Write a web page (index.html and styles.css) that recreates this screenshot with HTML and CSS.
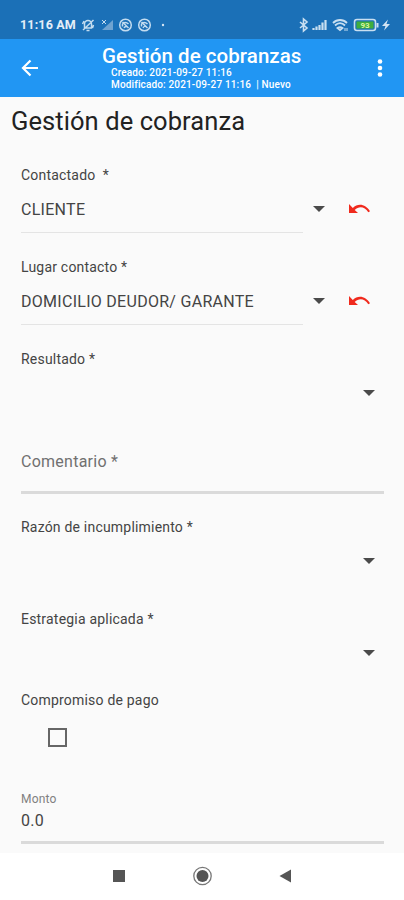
FILE: index.html
```html
<!DOCTYPE html>
<html lang="es">
<head>
    <meta charset="UTF-8">
    <meta name="viewport" content="width=device-width, initial-scale=1.0">
    <title>Gestión de cobranzas</title>
    <link rel="stylesheet" href="styles.css">
</head>
<body>

<div class="status-bar">
    <span class="clock">11:16 AM</span>
    <svg class="status-left" width="92" height="16" viewBox="0 0 92 16" fill="none" stroke="#c3dcf0" stroke-width="1.5">
        <!-- muted bell -->
        <path d="M4.500 11V7a3.500 3.500 0 0 1 7 0v4zM6.500 13.500h3M3 13L13.500 3M2.500 7l1.500-3M13.500 8l-1 3"/>
        <!-- no sim signal -->
        <path d="M33 3v10H22z" fill="#6fa3d1" stroke="none"/>
        <path d="M22 3l4 4M26 3l-4 4" stroke-width="1"/>
        <circle cx="45.500" cy="8" r="5.800"/>
        <path d="M42.500 9.500V7c1-2 4-2 6 0M44 11c1-2 2-2 4-1M42.500 5l6 6"/>
        <circle cx="64.500" cy="8" r="5.800"/>
        <path d="M61.500 9.500V7c1-2 4-2 6 0M63 11c1-2 2-2 4-1M61.500 5l6 6"/>
        <circle cx="83" cy="8" r="1.200" fill="#d3e4f3" stroke="none"/>
    </svg>
    <svg class="status-right" width="94" height="16" viewBox="0 0 94 16" fill="none" stroke="#c9dff1">
        <!-- bluetooth -->
        <path d="M2 5l7 6-3.500 3V2L9 5l-7 6" stroke-width="1.600"/>
        <!-- signal -->
        <path d="M15.500 11v2M18.500 9.500V13M21.500 8v5M24.500 5.500V13M27.500 3v10" stroke-width="2.200"/>
        <!-- wifi -->
        <path d="M35 6c4-4 10-4 14 0M37 8.500c3-3 7-3 10 0M39.500 11c2-1.500 3-1.500 5 0L42 13z" stroke-width="1.800"/>
        <path d="M47 11v3M49 11v3" stroke-width="1"/>
        <!-- battery -->
        <rect x="56.500" y="2.500" width="21" height="11" rx="2.500" stroke-width="1.600"/>
        <rect x="58.500" y="4.500" width="17" height="7" fill="#3fae3c" stroke="none"/>
        <path d="M79.500 6v4.500" stroke-width="2"/>
        <text x="67" y="11" text-anchor="middle" class="battery-level">93</text>
        <path d="M90 2.500l-6 6.500h3.500l-1.500 4.500 6-6.500h-3.500z" fill="#d3e4f3" stroke="none"/>
    </svg>
</div>

<div class="app-bar">
    <svg class="back" width="18" height="18" viewBox="0 0 18 18" fill="none" stroke="#fff" stroke-width="2.200">
        <path d="M17 9H2.500M9.500 1.500L2 9l7.500 7.500"/>
    </svg>
    <div class="app-title">
        <h1>Gestión de cobranzas</h1>
        <p>Creado: 2021-09-27 11:16</p>
        <p>Modificado: 2021-09-27 11:16 &nbsp;| Nuevo</p>
    </div>
    <svg class="menu" width="6" height="20" viewBox="0 0 6 20" fill="#fff">
        <circle cx="3" cy="3.500" r="2.300"/>
        <circle cx="3" cy="10" r="2.300"/>
        <circle cx="3" cy="16.500" r="2.300"/>
    </svg>
</div>

<div class="content">
    <h2>Gestión de cobranza</h2>

    <div class="field">
        <label>Contactado &nbsp;*</label>
        <div class="control">
            <div class="select filled">
                <span class="value">CLIENTE</span>
            </div>
            <span class="arrow"></span>
            <svg class="undo" width="23" height="12" viewBox="0 0 23 12">
                <path d="M1 1v9h9L6.700 6.900C11 2.800 16.500 3.200 20.300 9.300l1.700-1C18 1 10-0.500 4.800 4.900z" fill="#f02a1d"/>
            </svg>
        </div>
    </div>

    <div class="field">
        <label>Lugar contacto *</label>
        <div class="control">
            <div class="select filled">
                <span class="value">DOMICILIO DEUDOR/ GARANTE</span>
            </div>
            <span class="arrow"></span>
            <svg class="undo" width="23" height="12" viewBox="0 0 23 12">
                <path d="M1 1v9h9L6.700 6.900C11 2.800 16.500 3.200 20.300 9.300l1.700-1C18 1 10-0.500 4.800 4.900z" fill="#f02a1d"/>
            </svg>
        </div>
    </div>

    <div class="field">
        <label>Resultado *</label>
        <div class="control">
            <div class="select"></div>
            <span class="arrow"></span>
        </div>
    </div>

    <div class="text-field comment">Comentario *</div>

    <div class="field">
        <label>Razón de incumplimiento *</label>
        <div class="control">
            <div class="select"></div>
            <span class="arrow"></span>
        </div>
    </div>

    <div class="field">
        <label>Estrategia aplicada *</label>
        <div class="control">
            <div class="select"></div>
            <span class="arrow"></span>
        </div>
    </div>

    <div class="check-field">
        <label>Compromiso de pago</label>
        <div class="checkbox"></div>
    </div>

    <div class="text-field amount">
        <label>Monto</label>
        <span class="value">0.0</span>
    </div>
</div>

<div class="nav-bar">
    <svg width="180" height="20" viewBox="0 0 180 20" fill="#555">
        <rect x="1" y="4" width="12" height="12"/>
        <circle cx="90.500" cy="10" r="8.700" fill="none" stroke="#777" stroke-width="1.300"/>
        <circle cx="90.500" cy="10" r="6"/>
        <path d="M179 3.500v13L167.500 10z"/>
    </svg>
</div>

</body>
</html>
```

FILE: styles.css
```css
* {
    box-sizing: border-box;
}
body {
    margin: 0;
    width: 404px;
    height: 900px;
    display: flex;
    flex-direction: column;
    overflow: hidden;
    font-family: Roboto, sans-serif;
    background-color: #fafafa;
    color: #444;
}
h1, h2, p {
    margin: 0;
}
.status-bar {
    height: 39px;
    padding: 10px 12px 0 20px;
    display: flex;
    align-items: center;
    background-color: #1b70b7;
    color: #e4eef8;
}
.clock {
    width: 60px;
    font-size: 12.5px;
    font-weight: 700;
    letter-spacing: 0.15px;
    white-space: nowrap;
}
.status-right {
    margin-left: auto;
}
.battery-level {
    font-size: 8px;
    font-weight: 700;
    fill: #d9f5a0;
    stroke: none;
}
.app-bar {
    height: 58px;
    padding: 0 21px;
    display: flex;
    align-items: center;
    background-color: #2196f3;
    color: #fff;
}
.app-title {
    width: 200px;
    height: 58px;
    margin-left: 63px;
    padding-top: 6px;
    white-space: nowrap;
}
.app-title h1 {
    font-size: 20.5px;
    font-weight: 500;
    line-height: 22px;
    letter-spacing: 0.05px;
}
.app-title p {
    padding-left: 9px;
    font-size: 10px;
    font-weight: 500;
    line-height: 12px;
    letter-spacing: 0.15px;
}
.menu {
    margin-left: auto;
}
.content {
    height: 756px;
    padding: 8px 20px 0 21px;
}
h2 {
    height: 33px;
    margin: 0 0 28px -10px;
    font-size: 25.5px;
    font-weight: 400;
    line-height: 33px;
    letter-spacing: 0.08px;
    color: #222;
}
label {
    display: block;
    height: 18px;
    font-size: 14px;
    line-height: 19px;
    letter-spacing: 0.2px;
}
.field {
    margin-bottom: 25px;
}
.control {
    height: 49px;
    padding-right: 9px;
    display: flex;
    align-items: center;
}
.select {
    flex: 1;
    height: 49px;
    display: flex;
    align-items: center;
}
.filled {
    flex: none;
    width: 282px;
    margin-right: 10px;
    padding-top: 2px;
    border-bottom: 1px solid #e4e4e4;
}
.value {
    font-size: 16px;
    letter-spacing: 0.28px;
    color: #444;
}
.arrow {
    border: 6px solid transparent;
    border-top-color: #4a4a4a;
    border-bottom: 0;
}
.undo {
    margin-left: 23px;
}
.text-field {
    width: 363px;
    border-bottom: 3px solid #dadada;
}
.comment {
    height: 52px;
    margin-bottom: 24px;
    padding-top: 10px;
    font-size: 16px;
    line-height: 20px;
    letter-spacing: 0.25px;
    color: #707070;
}
.check-field {
    height: 87px;
    margin-top: -11px;
    margin-bottom: 13px;
}
.checkbox {
    width: 19px;
    height: 19px;
    margin: 19px 0 0 27px;
    border: 2px solid #666;
}
.amount {
    height: 53px;
}
.amount label {
    height: 16px;
    font-size: 12px;
    line-height: 17px;
    color: #808080;
}
.amount .value {
    display: block;
    margin-top: 4px;
    line-height: 20px;
}
.nav-bar {
    height: 47px;
    padding: 13px 0 0 112px;
    background-color: #fff;
}
```
